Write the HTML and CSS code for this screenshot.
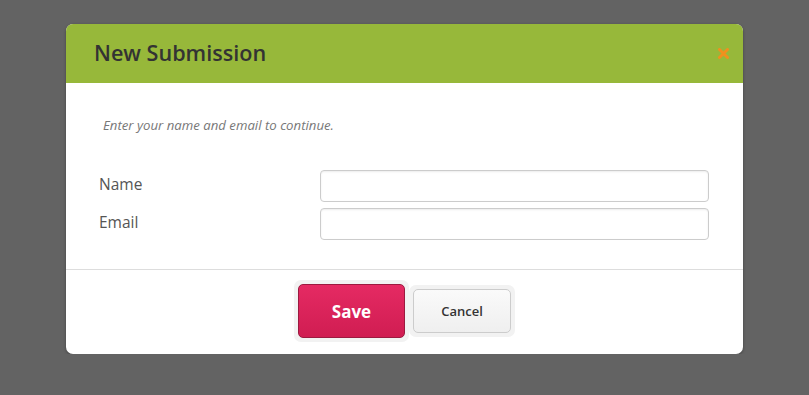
FILE: index.html
```html
<!DOCTYPE html>
<html lang="en">
<head>
  <meta charset="UTF-8">
  <meta name="viewport" content="width=device-width, initial-scale=1">
  <title>New Submission</title>
  <link rel="stylesheet" href="styles.css">
</head>
<body>
  <div class="dialog">
    <div class="dialog-header">
      <h1>New Submission</h1>
      <svg class="close" width="11" height="11" viewBox="0 0 11 11">
        <path d="M1.5 1.5 L9.5 9.5 M9.5 1.5 L1.5 9.5" stroke="#f0901e" stroke-width="3" stroke-linecap="round"/>
      </svg>
    </div>

    <div class="dialog-body">
      <p class="hint">Enter your name and email to continue.</p>
      <div class="row">
        <label for="name">Name</label>
        <input type="text" id="name">
      </div>
      <div class="row">
        <label for="email">Email</label>
        <input type="text" id="email">
      </div>
    </div>

    <div class="dialog-footer">
      <span class="btn-wrap"><button class="btn-save">Save</button></span>
      <span class="btn-wrap"><button class="btn-cancel">Cancel</button></span>
    </div>
  </div>
</body>
</html>
```

FILE: styles.css
```css
body {
  margin: 0;
  background: #636363;
  font-family: "Open Sans", "Liberation Sans", sans-serif;
}
.dialog {
  width: 677px;
  height: 330px;
  margin: 24px 0 0 66px;
  background: #fff;
  border-radius: 7px;
  overflow: hidden;
  box-shadow: 0 1px 3px rgba(0,0,0,0.35);
}
.dialog-header {
  height: 59px;
  background: #97b83a;
  display: flex;
  align-items: center;
  justify-content: space-between;
  padding: 0 14px 0 28px;
}
.dialog-header h1 {
  margin: 0;
  font-size: 21.6px;
  font-weight: 600;
  color: #333;
  position: relative;
  top: -1px;
}
.close {
  display: block;
}
.dialog-body {
  padding: 33px 33px 23px 33px;
  border-bottom: 1px solid #ddd;
}
.hint {
  margin: 0 0 36px 4px;
  font-size: 13.2px;
  font-style: italic;
  color: #777;
}
.row {
  display: flex;
  align-items: center;
  margin-bottom: 6px;
}
.row label {
  width: 221px;
  font-size: 15.5px;
  color: #555;
  position: relative;
  top: -2px;
}
.row input {
  width: 389px;
  height: 32px;
  box-sizing: border-box;
  border: 1px solid #ccc;
  border-radius: 4px;
  box-shadow: inset 0 1px 2px rgba(0,0,0,0.08);
}
.dialog-footer {
  display: flex;
  justify-content: center;
  align-items: center;
  padding: 10px 0 0 0;
}
.btn-wrap {
  display: inline-block;
  padding: 4px;
  background: #f2f2f2;
  border-radius: 7px;
}
.btn-save {
  width: 107px;
  height: 54px;
  border: 1px solid #9c1a40;
  border-radius: 5px;
  background: linear-gradient(#e52a63, #d01d52);
  color: #fff;
  font-family: "Open Sans", "Liberation Sans", sans-serif;
  font-size: 17px;
  font-weight: 700;
  cursor: pointer;
}
.btn-cancel {
  width: 98px;
  height: 44px;
  border: 1px solid #ccc;
  border-radius: 5px;
  background: linear-gradient(#fafafa, #efefef);
  color: #333;
  font-family: "Open Sans", "Liberation Sans", sans-serif;
  font-size: 13px;
  font-weight: 600;
  cursor: pointer;
}
```
